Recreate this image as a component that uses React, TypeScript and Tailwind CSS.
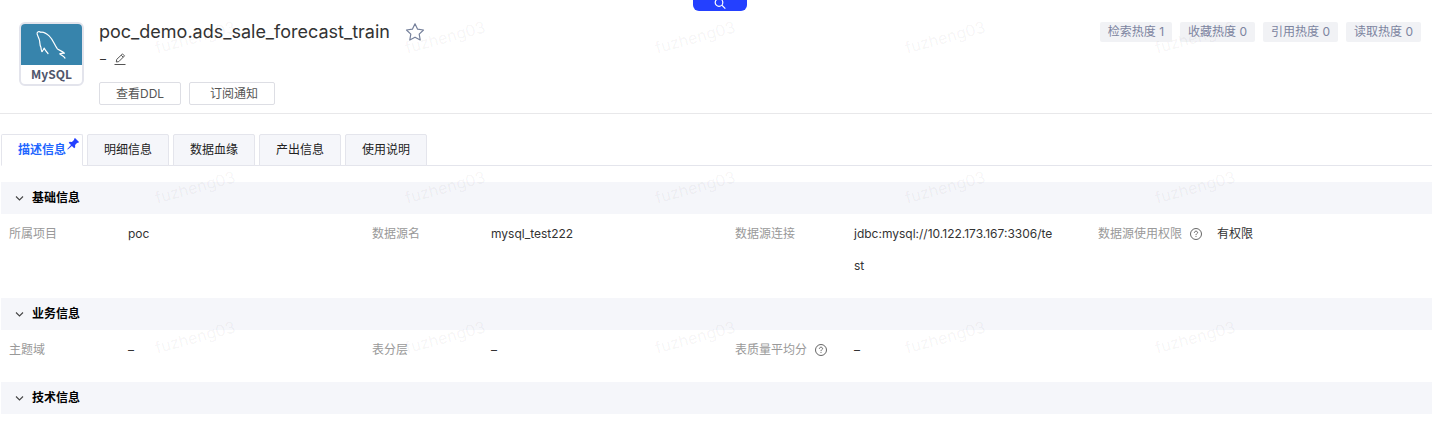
import { clsx } from 'clsx'

const HEAT = [
  { label: '检索热度', value: 1 },
  { label: '收藏热度', value: 0 },
  { label: '引用热度', value: 0 },
  { label: '读取热度', value: 0 },
]

const TABS = ['描述信息', '明细信息', '数据血缘', '产出信息', '使用说明']

const SECTIONS = [
  {
    title: '基础信息',
    fields: [
      { label: '所属项目', value: 'poc' },
      { label: '数据源名', value: 'mysql_test222' },
      { label: '数据源连接', value: 'jdbc:mysql://10.122.173.167:3306/test' },
      { label: '数据源使用权限', value: '有权限', help: true },
    ],
  },
  {
    title: '业务信息',
    fields: [
      { label: '主题域', value: '–' },
      { label: '表分层', value: '–' },
      { label: '表质量平均分', value: '–', help: true },
    ],
  },
  { title: '技术信息', fields: [] },
]

function MysqlLogo() {
  return (
    <div className="flex h-16 w-[65px] shrink-0 flex-col overflow-hidden rounded-md border-2 border-[#e3e4ec] bg-white">
      <div className="flex h-[41px] shrink-0 justify-center bg-[#3784ac]">
        <svg viewBox="0 0 61 41" className="h-[41px] w-[61px]" fill="none" stroke="#fff" strokeWidth="1.2" strokeLinecap="round" strokeLinejoin="round">
          <path d="M21 27.500c-.8-1.300-1-2.800-1.100-4.200-1.100-2-1-4-1.200-5.800-.2-3-2-5-2.600-7.600C15.900 7.600 18 7 19.800 8.300c2.600-.5 5.400 1 8.300 3.600 4.200 3.900 5.200 9 8.300 13 1.400 1.300 4.800 2 7 4.300-1.800 0-3.400 0-4.600.6 1.100 1.400 3.600 2 5.200 4.300" />
          <path d="M21 27.500c1-.7 1.700-2 2.100-3.400.9 2 2 3.300 3.900 5.400" />
        </svg>
      </div>
      <p className="text-center font-['Noto_Sans_CJK_SC',sans-serif] text-xs leading-[18px] font-bold text-[#50566b]">MySQL</p>
    </div>
  )
}

function StarIcon() {
  return (
    <svg viewBox="0 0 20 20" className="h-5 w-5" fill="none" stroke="#76819b" strokeWidth="1.2" strokeLinejoin="round">
      <path d="M10 1.800l2.600 5.400 5.900.8-4.300 4.100 1 5.900L10 15.200 4.800 18l1-5.900L1.500 8l5.900-.8z" />
    </svg>
  )
}

function EditIcon() {
  return (
    <svg viewBox="0 0 12 12" className="h-3 w-3" fill="none" stroke="#555" strokeWidth="1">
      <path d="M2.300 9l.4-2.600L8.500.9l2 2L4.800 8.600zM7.200 2.200l2 2M.5 11.500h11" />
    </svg>
  )
}

function HelpIcon() {
  return (
    <svg viewBox="0 0 12 12" className="h-3 w-3" fill="none" stroke="#555" strokeWidth="0.9">
      <circle cx="6" cy="6" r="5.500" />
      <path d="M4.400 4.800c0-1 .7-1.600 1.600-1.600s1.600.6 1.600 1.400c0 .9-1.600 1.200-1.600 2.400M6 7.900v1" />
    </svg>
  )
}

function PinIcon() {
  return (
    <svg viewBox="0 0 12 12" className="absolute top-[3px] right-[3px] h-3 w-3" fill="#2440ff">
      <path d="M8 0l4 4-1 1-.8-.2L8.100 7.100l.1 2.200-1 1-2.300-2.300-4.100 3.600-.5-.5L4 7.100 1.700 4.800l1-1 2.200.1L7.200 1.800 7 1z" />
    </svg>
  )
}

function Field({ label, value, help }: { label: string; value: string; help?: boolean }) {
  return (
    <div className="flex">
      <dt className="flex h-8 w-[119px] shrink-0 items-center gap-2 text-[#999]">
        {label}
        {help && <HelpIcon />}
      </dt>
      <dd className="min-w-0 flex-1 pr-2 break-all text-[#333]">{value}</dd>
    </div>
  )
}

function Watermark() {
  return (
    <div aria-hidden="true" className="pointer-events-none absolute inset-0 overflow-hidden pl-[70px]">
      <div className="grid grid-cols-[repeat(5,250px)] auto-rows-[150px]">
        {Array.from({ length: 15 }, (_, i) => (
          <div key={i} className="flex items-start justify-center pt-[25px]">
            <span className="-rotate-15 text-base leading-6 text-black/5">fuzheng03</span>
          </div>
        ))}
      </div>
    </div>
  )
}

export default function App() {
  return (
    <div className="relative min-h-screen overflow-hidden bg-white font-[Inter,'Noto_Sans_CJK_SC',sans-serif] text-xs text-[#333]">
      {/* Search handle */}
      <div className="absolute inset-x-0 top-0 flex justify-center pl-2">
        <button aria-label="搜索" className="flex h-[11px] w-[54px] items-end justify-center rounded-b-md bg-[#2440ff]">
          <svg viewBox="0 0 12 11" className="h-[11px] w-3" fill="none" stroke="#fff" strokeWidth="1.200">
            <circle cx="5" cy="2.500" r="3.800" />
            <path d="M7.800 5.200l3.500 3.500" />
          </svg>
        </button>
      </div>

      <header className="flex items-start border-b border-[#e8e8ea] pt-[22px] pr-[11px] pb-2 pl-[19px]">
        <MysqlLogo />
        <div className="ml-[15px] flex-1">
          <div className="flex h-5 items-center gap-[15px]">
            <h1 className="text-lg leading-5">poc_demo.ads_sale_forecast_train</h1>
            <button aria-label="收藏"><StarIcon /></button>
          </div>
          <div className="mt-2 flex h-[18px] items-center gap-2 pl-px">
            <span>–</span>
            <button aria-label="编辑"><EditIcon /></button>
          </div>
          <div className="mt-[14px] flex gap-2">
            <button className="h-[23px] rounded-xs border border-[#dddee4] px-4 leading-5 text-[#555]">查看DDL</button>
            <button className="h-[23px] rounded-xs border border-[#dddee4] pr-4 pl-5 leading-5 text-[#555]">订阅通知</button>
          </div>
        </div>
        <div className="flex gap-2">
          {HEAT.map(h => (
            <span key={h.label} className="h-5 rounded-xs bg-[#f1f2f5] px-2 leading-5 text-[#7c84a0]">
              {h.label} {h.value}
            </span>
          ))}
        </div>
      </header>

      <main className="pt-5 pl-px">
        {/* Tabs */}
        <div role="tablist" className="flex gap-1 border-b border-[#e4e5ec]">
          {TABS.map((tab, i) => (
            <button
              key={tab}
              role="tab"
              aria-selected={i === 0}
              className={clsx(
                'relative -mb-px h-8 w-[82px] rounded-t-xs border border-[#e4e5ec]',
                i === 0 ? 'border-b-white bg-white font-bold text-[#1f66ff]' : 'bg-[#f5f6fa] text-[#222]',
              )}
            >
              {tab}
              {i === 0 && <PinIcon />}
            </button>
          ))}
        </div>

        {/* Sections */}
        <div className="pt-4">
          {SECTIONS.map(s => (
            <section key={s.title}>
              <h2 className="bg-[#f5f6fa] font-bold text-black">
                <button aria-expanded="true" className="flex h-8 w-full items-center gap-2 pl-[14px]">
                  <svg viewBox="0 0 9 8" className="h-2 w-[9px]" fill="none" stroke="#444" strokeWidth="1.100">
                    <path d="M1 2.500L4.500 6 8 2.500" />
                  </svg>
                  {s.title}
                </button>
              </h2>
              <dl className="grid grid-cols-4 gap-8 pt-1 pr-[3px] pb-4 pl-2 leading-8">
                {s.fields.map(f => (
                  <Field key={f.label} {...f} />
                ))}
              </dl>
            </section>
          ))}
        </div>
      </main>

      <Watermark />
    </div>
  )
}
